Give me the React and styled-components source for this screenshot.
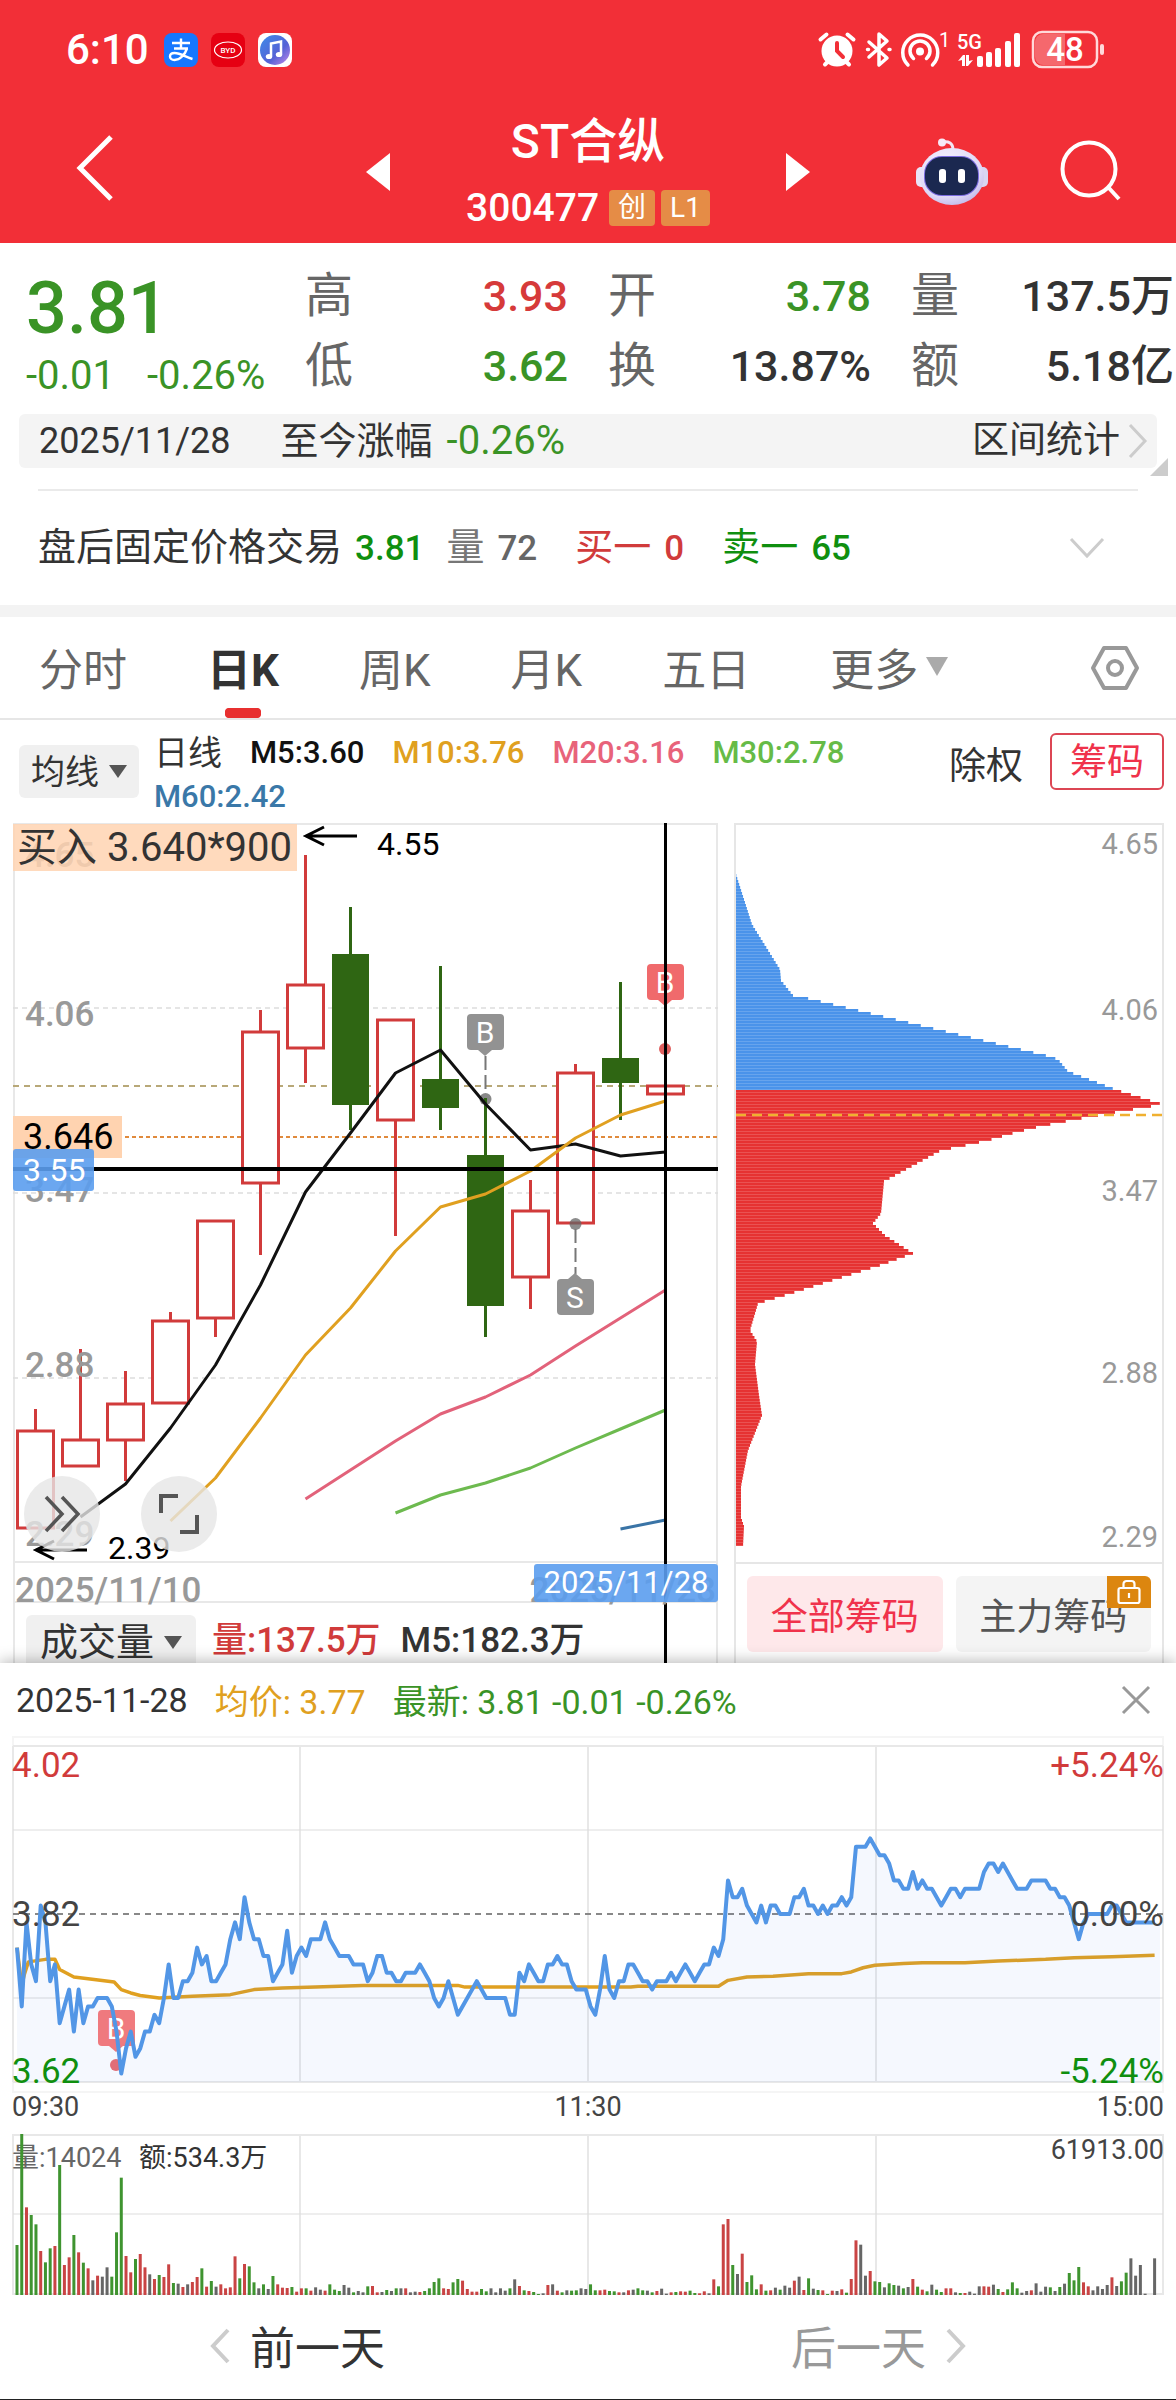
import React from "react";
import styled, { createGlobalStyle } from "styled-components";

const RED = "#d13b3b";
const GREEN = "#3a9326";
const DEEP_GREEN = "#0f8f0f";
const GOLD = "#e0a020";
const FONT = 'Roboto, "Noto Sans CJK SC", sans-serif';

const GlobalStyle = createGlobalStyle`
  *, *::before, *::after { box-sizing: border-box; }
  body { margin: 0; background: #fff; font-family: ${FONT}; color: #333; }
  button, select { font-family: inherit; }
  button { border: 0; padding: 0; background: none; cursor: pointer; color: inherit; }
  svg { display: block; overflow: visible; }
  svg text { font-family: ${FONT}; }
  dl, dd, dt, h1, p { margin: 0; }
`;

const Page = styled.div`
  width: 100%;
  overflow: hidden;
`;

/* ---------- header ---------- */

const Header = styled.header`
  background: #f22f37;
  color: #fff;
`;

const StatusBar = styled.div`
  display: flex;
  align-items: center;
  justify-content: space-between;
  height: 100px;
  padding: 0 70px 0 66px;
`;

const StatusGroup = styled.div`
  display: flex;
  align-items: center;
  gap: ${(p) => p.$gap}px;
`;

const Clock = styled.span`
  font-size: 42px;
  line-height: 48px;
  font-weight: 500;
  padding-right: 2px;
`;

const NavBar = styled.div`
  display: grid;
  grid-template-columns: 1fr auto 1fr;
  align-items: center;
  height: 143px;
  padding: 0 54px 0 76px;
`;

const Switcher = styled.div`
  display: flex;
  align-items: center;
  justify-content: space-between;
  width: 444px;
  margin-left: -22px;
`;

const TitleStack = styled.div`
  display: flex;
  flex-direction: column;
  align-items: center;
  padding-top: 12px;
`;

const Title = styled.h1`
  font-size: 48px;
  line-height: 60px;
  font-weight: 500;
`;

const CodeLine = styled.div`
  display: flex;
  align-items: center;
  gap: 6px;
  height: 72px;
  font-size: 39px;
  font-weight: 500;
`;

const Badge = styled.span`
  height: 36px;
  padding: 0 9px;
  border-radius: 4px;
  background: #e58c46;
  font-size: 28px;
  line-height: 36px;
  font-weight: 400;
  &:first-of-type { margin-left: 4px; }
`;

const NavActions = styled.div`
  display: flex;
  align-items: center;
  justify-content: flex-end;
  gap: 72px;
`;

/* ---------- quote ---------- */

const Quote = styled.section`
  padding-top: 18px;
`;

const QuoteTop = styled.div`
  display: flex;
  align-items: flex-start;
  padding-right: 2px;
`;

const PriceBlock = styled.div`
  width: 305px;
  flex: none;
  padding: 7px 0 0 26px;
  color: ${GREEN};
`;

const Price = styled.div`
  font-size: 72px;
  line-height: 82px;
  font-weight: 500;
`;

const Change = styled.div`
  display: flex;
  gap: 32px;
  font-size: 40px;
  line-height: 52px;
`;

const Stats = styled.dl`
  flex: 1;
  display: grid;
  grid-template-columns: repeat(3, 1fr);
  column-gap: 40px;
`;

const Stat = styled.div`
  display: flex;
  justify-content: space-between;
  align-items: center;
  height: 70px;
  dt { font-size: 48px; line-height: 70px; color: #666; }
  dd { font-size: 43px; line-height: 70px; font-weight: 500; color: ${(p) => p.$tone || "#333"}; white-space: nowrap; }
`;

const RangeStrip = styled.div`
  position: relative;
  display: flex;
  align-items: center;
  height: 54px;
  margin: 12px 19px 0;
  padding: 0 9px 0 20px;
  border-radius: 6px;
  background: #f4f4f4;
  font-size: 38px;
  line-height: 54px;
`;

const RangeDate = styled.span`
  font-size: 36px;
  margin-right: 50px;
`;

const RangeValue = styled.span`
  color: ${GREEN};
  margin-left: 14px;
  font-size: 40px;
`;

const RangeButton = styled.button`
  display: flex;
  align-items: center;
  gap: 8px;
  margin-left: auto;
  font-size: 37px;
  line-height: 54px;
`;

const Corner = styled.span`
  position: absolute;
  right: -11px;
  bottom: -8px;
  width: 18px;
  height: 18px;
  background: #ccc;
  clip-path: polygon(100% 0, 100% 100%, 0 100%);
`;

const AfterHours = styled.div`
  display: flex;
  align-items: center;
  height: 116px;
  margin: 21px 38px 0;
  border-top: 2px solid #eaeaea;
  padding-right: 34px;
  font-size: 38px;
`;

const Pair = styled.span`
  display: flex;
  align-items: baseline;
  gap: 13px;
  margin-right: ${(p) => p.$after}px;
  line-height: 52px;
  color: ${(p) => p.$tone};
  b { font-size: 35px; font-weight: 500; color: ${(p) => p.$value}; }
`;

const ExpandButton = styled.button`
  margin-left: auto;
`;

const Band = styled.div`
  height: 12px;
  background: #f3f3f3;
`;

/* ---------- tabs and legend ---------- */

const Tabs = styled.nav`
  display: flex;
  align-items: stretch;
  gap: 80px;
  height: 103px;
  padding: 0 37px 0 39px;
  border-bottom: 2px solid #e6e6e6;
`;

const Tab = styled.button`
  display: flex;
  align-items: center;
  gap: 8px;
  padding-bottom: 2px;
  font-size: 44px;
  white-space: nowrap;
  color: ${(p) => (p.$active ? "#333" : "#666")};
  font-weight: ${(p) => (p.$active ? 700 : 400)};
  background: ${(p) =>
    p.$active
      ? "radial-gradient(circle at 5px 5px, #e83030 5px, transparent 6px) 18px 100% / 10px 10px no-repeat, radial-gradient(circle at 5px 5px, #e83030 5px, transparent 6px) 44px 100% / 10px 10px no-repeat, linear-gradient(#e83030, #e83030) 23px 100% / 26px 10px no-repeat"
      : "none"};
`;

const SettingsButton = styled.button`
  margin-left: auto;
`;

const Legend = styled.div`
  display: flex;
  align-items: flex-start;
  height: 103px;
  padding: 0 12px 0 19px;
`;

const SelectBox = styled.label`
  display: grid;
  grid-template-columns: 1fr;
  align-items: center;
  flex: none;
  width: ${(p) => p.$width}px;
  height: ${(p) => p.$height}px;
  margin-top: ${(p) => p.$top}px;
  border-radius: ${(p) => p.$radius};
  background: #f0f0f0;
  select, svg { grid-area: 1 / 1; }
  select {
    appearance: none;
    width: 100%;
    height: 100%;
    border: 0;
    padding: 0 0 0 ${(p) => p.$pad}px;
    background: transparent;
    color: #333;
    font-size: ${(p) => p.$size}px;
  }
  svg { justify-self: end; margin-right: ${(p) => p.$pad}px; pointer-events: none; }
`;

const Averages = styled.div`
  flex: 1;
  display: flex;
  flex-wrap: wrap;
  column-gap: 28px;
  padding: 11px 0 0 15px;
  max-width: 760px;
  line-height: 44px;
`;

const Average = styled.span`
  color: ${(p) => p.$tone};
  font-size: ${(p) => (p.$plain ? 34 : 31)}px;
  font-weight: ${(p) => (p.$plain ? 400 : 500)};
`;

const LegendActions = styled.div`
  display: flex;
  align-items: flex-end;
  gap: 27px;
  margin-left: auto;
  padding-top: 13px;
`;

const PlainButton = styled.button`
  font-size: 37px;
  line-height: 46px;
  color: #333;
`;

const ChipButton = styled.button`
  width: 114px;
  height: 57px;
  border: 2px solid #dc4654;
  border-radius: 6px;
  padding-top: 3px;
  color: #f0324b;
  font-size: 37px;
  line-height: 50px;
`;

/* ---------- charts ---------- */

const Charts = styled.div`
  display: grid;
  grid-template-columns: 705fr 430fr;
  gap: 16px;
  padding: 0 12px 0 13px;
`;

const KPanel = styled.section`
  position: relative;
  border-right: 2px solid #e8e8e8;
  border-left: 2px solid #e8e8e8;
  svg.plot { width: calc(100% + 4px); margin: 0 -2px; height: auto; }
`;

const CrossLine = styled.span`
  position: absolute;
  top: 0;
  bottom: 0;
  left: 92.6%;
  width: 3px;
  background: #000;
`;

const RoundButton = styled.button`
  display: grid;
  place-items: center;
  width: 76px;
  height: 76px;
  border-radius: 50%;
  background: rgba(230, 230, 230, 0.8);
`;

const FloatingTools = styled.div`
  position: absolute;
  left: 9px;
  bottom: 111px;
  display: flex;
  gap: 41px;
`;

const DateRow = styled.div`
  position: relative;
  display: flex;
  justify-content: space-between;
  align-items: flex-end;
  height: 40px;
  border-bottom: 2px solid #e8e8e8;
  color: #999;
  font-size: 35px;
  line-height: 20px;
  font-weight: 500;
`;

const ActiveDate = styled.span`
  position: absolute;
  right: -2px;
  top: 1px;
  z-index: 1;
  width: 184px;
  height: 38px;
  border-radius: 3px;
  background: rgba(91, 157, 238, 0.9);
  color: #fff;
  font-size: 31px;
  line-height: 38px;
  font-weight: 400;
  text-align: center;
`;

const VolumeRow = styled.div`
  display: flex;
  align-items: flex-start;
  gap: 16px;
  height: 60px;
  padding: 0 0 0 11px;
  font-size: 35px;
  font-weight: 500;
`;

const VolumeText = styled.span`
  color: ${(p) => p.$tone};
  line-height: 76px;
  margin-right: 4px;
`;

const ChipPanel = styled.section`
  border: 2px solid #e6e6e6;
  border-bottom: 0;
  svg.plot { width: 100%; height: auto; }
`;

const ChipTabs = styled.div`
  display: flex;
  gap: 13px;
  padding: 12px 11px 0;
  border-top: 2px solid #e6e6e6;
`;

const ChipTab = styled.button`
  position: relative;
  flex: 1;
  height: 76px;
  border-radius: 6px;
  background: ${(p) => (p.$active ? "#fee8ea" : "#f4f4f4")};
  color: ${(p) => (p.$active ? "#f0324b" : "#555")};
  font-size: 37px;
`;

const LockBadge = styled.span`
  position: absolute;
  top: 0;
  right: 0;
  display: grid;
  place-items: center;
  width: 44px;
  height: 32px;
  border-radius: 0 6px 0 0;
  background: #dc860f;
`;

/* ---------- intraday sheet ---------- */

const Sheet = styled.section`
  position: relative;
  z-index: 2;
  background: #fff;
  box-shadow: 0 -2px 14px rgba(0, 0, 0, 0.28);
`;

const SheetHead = styled.div`
  display: flex;
  align-items: center;
  gap: 27px;
  height: 73px;
  padding: 0 26px 0 16px;
  font-size: 34px;
`;

const HeadText = styled.span`
  color: ${(p) => p.$tone};
`;

const CloseButton = styled.button`
  margin-left: auto;
`;

const Intraday = styled.div`
  padding: 0 12px;
  svg.plot { width: 100%; height: auto; }
`;

const Times = styled.div`
  display: flex;
  justify-content: space-between;
  height: 41px;
  font-size: 27px;
  line-height: 29px;
  color: #444;
`;

const Footer = styled.footer`
  display: grid;
  grid-template-columns: 1fr 1fr;
  height: 105px;
  padding: 0 7px 3px;
  border-bottom: 1px solid #222;
`;

const DayButton = styled.button`
  display: flex;
  align-items: center;
  justify-content: center;
  gap: 20px;
  font-size: 45px;
  color: ${(p) => p.$tone};
`;

/* ---------- icons ---------- */

function Triangle({ w, h, points, fill }) {
  return (
    <svg width={w} height={h} viewBox={`0 0 ${w} ${h}`} aria-hidden="true">
      <polygon points={points} fill={fill} />
    </svg>
  );
}

function Down({ w = 18, h = 13, fill = "#555" }) {
  return <Triangle w={w} h={h} points={`0,0 ${w},0 ${w / 2},${h}`} fill={fill} />;
}

function Chevron({ w, h, d, color = "#ccc", stroke = 3 }) {
  return (
    <svg width={w} height={h} viewBox={`0 0 ${w} ${h}`} fill="none" stroke={color} strokeWidth={stroke} aria-hidden="true">
      <path d={d} />
    </svg>
  );
}

function AlipayIcon() {
  return (
    <svg width="34" height="34" viewBox="0 0 34 34" fill="none" stroke="#fff" strokeWidth="2.4">
      <rect width="34" height="34" rx="8" fill="#1677ff" stroke="none" />
      <path d="M8 10h18M17 5.500v10M10 15.500h14M23 15.500c-2 6-7 11.500-12.500 11.500-6 0-6-7 0-7 6 0 11 4 18 6" />
    </svg>
  );
}

function BydIcon() {
  return (
    <svg width="34" height="34" viewBox="0 0 34 34">
      <rect width="34" height="34" rx="8" fill="#e60012" />
      <ellipse cx="17" cy="17" rx="13.500" ry="8" fill="none" stroke="#fff" strokeWidth="1.200" />
      <text x="17" y="20" fontSize="8" fontWeight="500" fill="#fff" textAnchor="middle">BYD</text>
    </svg>
  );
}

function MusicIcon() {
  return (
    <svg width="34" height="34" viewBox="0 0 34 34">
      <defs>
        <linearGradient id="music" x1="0" y1="0" x2="1" y2="1">
          <stop offset="0" stopColor="#3f8ce8" />
          <stop offset="0.6" stopColor="#5562d6" />
          <stop offset="1" stopColor="#c58bea" />
        </linearGradient>
      </defs>
      <rect width="34" height="34" rx="8" fill="#fff" />
      <circle cx="17" cy="17" r="15" fill="url(#music)" />
      <path d="M13 23.500V10.500l10-2v13" fill="none" stroke="#fff" strokeWidth="2.500" />
      <ellipse cx="11" cy="23.500" rx="3.200" ry="2.600" fill="#fff" />
      <ellipse cx="21" cy="21.500" rx="3.200" ry="2.600" fill="#fff" />
    </svg>
  );
}

function StatusIcons() {
  return (
    <svg width="288" height="60" viewBox="818 20 288 60" fill="none" stroke="#fff" strokeLinecap="round" aria-hidden="true">
      <circle cx="837" cy="51" r="15.500" fill="#fff" stroke="none" />
      <path d="M820.500 39.500l6-5M853.500 39.500l-6-5M825 64.500l4-4M849 64.500l-4-4" strokeWidth="4" />
      <path d="M837 43v8l6 6" stroke="#f22f37" strokeWidth="4" />
      <path d="M869 42l18 16-8 7V34l8 7-18 16" strokeWidth="3.500" strokeLinejoin="round" />
      <path d="M867.500 49.500h1M889 49.500h1" strokeWidth="3.500" />
      <circle cx="920" cy="51.500" r="4" fill="#fff" stroke="none" />
      <path d="M913.500 58.500a10 10 0 1 1 13 0M908 65a17.500 17.500 0 1 1 24.500 0" strokeWidth="3.500" />
      <g fill="#fff" stroke="none">
        <text x="939" y="47" fontSize="20">1</text>
        <text x="957" y="49" fontSize="20" fontWeight="500">5G</text>
        <rect x="977" y="56" width="6" height="11" rx="2" />
        <rect x="986" y="52" width="6" height="15" rx="2" />
        <rect x="995" y="48" width="6" height="19" rx="2" />
        <rect x="1005" y="41" width="6" height="26" rx="2" />
        <rect x="1014" y="33" width="6" height="34" rx="2" />
        <path d="M958 61l5-6h2v11h-3v-6zM973 60l-5 6h-2V55h3v6z" />
      </g>
      <rect x="1033" y="32" width="64" height="35" rx="9" strokeWidth="2.500" stroke="#ffd9da" />
      <path d="M1043 34h22v31h-22a8 8 0 0 1-8-8V42a8 8 0 0 1 8-8z" fill="#f5686d" stroke="none" />
      <rect x="1100" y="44" width="4" height="11" rx="2" fill="#ffd9da" stroke="none" />
      <text x="1065" y="61" fontSize="33" fontWeight="500" fill="#fff" stroke="none" textAnchor="middle">48</text>
    </svg>
  );
}

function RobotIcon() {
  return (
    <svg width="72" height="68" viewBox="0 0 72 68" aria-hidden="true">
      <defs>
        <radialGradient id="helmet" cx="0.4" cy="0.3" r="0.8">
          <stop offset="0" stopColor="#f8f4ff" />
          <stop offset="0.7" stopColor="#ded8f6" />
          <stop offset="1" stopColor="#b9b0e6" />
        </radialGradient>
      </defs>
      <path d="M26 4c7-1 11 1 11 8" fill="none" stroke="#f4e6f4" strokeWidth="3" />
      <circle cx="26" cy="4.500" r="4" fill="#f7e9f6" />
      <rect x="0" y="29" width="12" height="20" rx="5" fill="#e9e4f7" />
      <rect x="60" y="29" width="12" height="20" rx="5" fill="#d9d5f2" />
      <ellipse cx="36" cy="38.500" rx="32" ry="28.500" fill="url(#helmet)" />
      <rect x="8" y="18" width="55" height="40" rx="18" fill="#7a6be0" />
      <rect x="9" y="19" width="53" height="38" rx="17" fill="#1b2850" />
      <rect x="23" y="31" width="7" height="14" rx="3" fill="#fff" />
      <rect x="42" y="31" width="7" height="14" rx="3" fill="#fff" />
    </svg>
  );
}

function SearchIcon() {
  return (
    <svg width="62" height="62" viewBox="0 0 62 62" fill="none" stroke="#fff" strokeWidth="4" aria-hidden="true">
      <circle cx="29" cy="28" r="26.500" />
      <path d="M48 46l11 12" />
    </svg>
  );
}

function SettingsIcon() {
  return (
    <svg width="48" height="46" viewBox="0 0 48 46" fill="none" stroke="#999" strokeWidth="4" strokeLinejoin="round" aria-hidden="true">
      <path d="M13 3h22l11 20-11 20H13L2 23z" />
      <circle cx="24" cy="23" r="7" />
    </svg>
  );
}

/* ---------- K line chart ---------- */

/* Each candle: wick top, body top, body bottom, wick bottom, rising or falling. */
const CANDLES = [
  [586, 608, 705, 705, "up"],
  [526, 617, 643, 643, "up"],
  [548, 581, 617, 658, "up"],
  [489, 498, 580, 580, "up"],
  [398, 398, 495, 514, "up"],
  [187, 209, 360, 432, "up"],
  [32, 162, 225, 260, "up"],
  [84, 131, 282, 307, "down"],
  [197, 197, 297, 413, "up"],
  [143, 256, 285, 307, "down"],
  [275, 332, 483, 514, "down"],
  [357, 388, 454, 486, "up"],
  [241, 250, 400, 400, "up"],
  [159, 235, 260, 297, "down"],
  [263, 263, 271, 271, "up"],
];

const candleX = (i) => 22.5 + i * 45;

/* Moving averages: index of the first candle, then one height per candle. */
const MOVING = [
  { color: "#111", from: 1, ys: [694, 661, 605, 542, 462, 369, 310, 250, 227, 281, 327, 321, 333, 329] },
  { color: GOLD, from: 3, ys: [698, 655, 595, 532, 485, 428, 384, 371, 348, 315, 292, 278] },
  { color: "#e2627a", from: 6, ys: [676, 647, 618, 591, 574, 552, 523, 495, 467] },
  { color: "#6dba4f", from: 8, ys: [690, 672, 660, 645, 625, 606, 587] },
  { color: "#3a74a6", from: 13, ys: [706, 697] },
];

function Candle({ x, data }) {
  const [high, top, bottom, low, dir] = data;
  if (dir === "down") {
    return (
      <g fill="#2f6613">
        <rect x={x - 1.5} y={high} width="3" height={low - high} />
        <rect x={x - 18.5} y={top} width="37" height={bottom - top} />
      </g>
    );
  }
  return (
    <g stroke={RED} strokeWidth="3" fill="none">
      <path d={`M${x} ${high}V${top}M${x} ${bottom}V${low}`} />
      <rect x={x - 18} y={top} width="36" height={bottom - top} fill="#fff" />
    </g>
  );
}

function Flag({ x, y, letter, color, up }) {
  return (
    <g>
      <rect x={x - 18} y={y} width="37" height="36" rx="4" fill={color} />
      <polygon points={up ? `${x - 7},${y} ${x},${y - 6} ${x + 7},${y}` : `${x - 7},${y + 36} ${x},${y + 42} ${x + 7},${y + 36}`} fill={color} />
      <text x={x} y={y + 29} fontSize="30" fill="#fff" textAnchor="middle">{letter}</text>
    </g>
  );
}

function KChart() {
  const axis = [["4.65", 44], ["4.06", 203], ["3.47", 379], ["2.88", 554], ["2.29", 723]];
  return (
    <svg className="plot" viewBox="0 0 705 740" role="img" aria-label="日K">
      <path d="M0 1H705M0 739H705" stroke="#e8e8e8" strokeWidth="2" />
      <path d="M0 185H705M0 370H705M0 555H705" stroke="#ddd" strokeWidth="1.5" strokeDasharray="5 4" />
      <path d="M0 263H705" stroke="#b8a878" strokeWidth="2" strokeDasharray="6 5" />
      <path d="M0 314H705" stroke="#e08a3c" strokeWidth="2" strokeDasharray="4 3" />
      <line x1="472.5" y1="233" x2="472.5" y2="276" stroke="#777" strokeWidth="2" strokeDasharray="14 5" />
      <circle cx="472.5" cy="276" r="6" fill="#888" />
      {CANDLES.map((c, i) => <Candle key={i} x={candleX(i)} data={c} />)}
      {axis.map(([t, y]) => (
        <text key={t} x="12" y={y} fontSize="35" fontWeight="500" fill="#999">{t}</text>
      ))}
      {MOVING.map((m) => (
        <polyline
          key={m.color}
          points={m.ys.map((y, i) => `${candleX(m.from + i)},${y}`).join(" ")}
          fill="none"
          stroke={m.color}
          strokeWidth="3"
          strokeLinejoin="round"
        />
      ))}
      <circle cx="562.5" cy="401" r="6" fill="#666" fillOpacity="0.75" />
      <line x1="562.5" y1="406" x2="562.5" y2="451" stroke="#777" strokeWidth="2" strokeDasharray="14 5" />
      <Flag x={472} y={191} letter="B" color="#929292" />
      <Flag x={562} y={456} letter="S" color="#929292" up />
      <Flag x={652} y={141} letter="B" color="#f06a6c" />
      <circle cx="652" cy="226" r="6" fill="#e0605f" />
      <path d="M0 346H705" stroke="#000" strokeWidth="4" />
      <rect x="0" y="1" width="284" height="47" fill="#ffd3b0" fillOpacity="0.84" />
      <text x="4" y="38" fontSize="40" fill="#333">买入 3.640*900</text>
      <rect x="0" y="293" width="109" height="42" fill="#ffd3b0" />
      <text x="10" y="326" fontSize="36" fill="#000">3.646</text>
      <rect x="0" y="326" width="81" height="42" rx="3" fill="#5b9dee" fillOpacity="0.9" />
      <text x="10" y="358" fontSize="32" fill="#fff">3.55</text>
      <g fill="none" stroke="#000" strokeWidth="3">
        <path d="M344 13H293M311 4l-18 9 18 9" />
        <path d="M74 727H23M41 718l-18 9 18 9" />
      </g>
      <text x="364" y="32" fontSize="32" fill="#000">4.55</text>
      <text x="95" y="736" fontSize="32" fill="#000">2.39</text>
    </svg>
  );
}

/* ---------- chip distribution ---------- */

/* Height in the panel against the width of the bar there. */
const CHIPS = [
  [49, 0], [99, 16], [144, 44], [155, 45], [170, 57], [172, 68], [231, 314], [234, 322], [246, 332], [265, 382],
  [279, 427], [288, 373], [294, 340], [301, 304], [307, 280], [315, 252], [321, 225], [325, 205], [356, 148],
  [388, 145], [398, 137], [410, 149], [428, 177], [439, 147], [469, 52], [478, 22], [505, 14], [516, 21],
  [539, 19], [570, 23], [590, 26], [625, 12], [661, 5], [692, 5], [701, 8], [721, 7],
];

function chipWidth(y) {
  const k = CHIPS.findIndex((p) => p[0] >= y);
  if (k <= 0) return 0;
  const [y0, w0] = CHIPS[k - 1];
  const [y1, w1] = CHIPS[k];
  return w0 + ((w1 - w0) * (y - y0)) / (y1 - y0);
}

function ChipChart() {
  const bars = [];
  for (let y = 49; y < 720; y += 3) bars.push([y, chipWidth(y + 1)]);
  const axis = [["4.65", 29], ["4.06", 195], ["3.47", 376], ["2.88", 558], ["2.29", 722]];
  return (
    <svg className="plot" viewBox="0 0 426 737" role="img" aria-label="筹码">
      {bars.map(([y, w]) => (
        <g key={y}>
          <rect x="0" y={y} width={w} height="3" fill={y < 265 ? "#4a93ea" : "#e63232"} />
          <rect x="0" y={y + 2} width={w} height="1" fill="#fff" fillOpacity="0.16" />
        </g>
      ))}
      <path d="M0 290H426" stroke="#f0b030" strokeWidth="2.5" strokeDasharray="10 6" />
      {axis.map(([t, y]) => (
        <text key={t} x="422" y={y} fontSize="29" fill="#999" textAnchor="end">{t}</text>
      ))}
    </svg>
  );
}

/* ---------- intraday charts ---------- */

/* [minute, cents above the previous close] */
const PRICE = [
  [0, -4], [1, -11], [2, -1], [3, -6], [4, -8], [5, 1], [6, -1], [7, -8], [8, -6], [9, -13], [10, -11], [11, -9],
  [12, -14], [13, -9], [14, -13], [15, -11], [16, -11], [17, -10], [19, -10], [20, -11], [21, -14], [22, -19],
  [23, -16], [24, -14], [25, -17], [26, -16], [27, -14], [28, -14], [29, -12], [30, -13], [31, -10], [32, -6],
  [33, -10], [34, -10], [35, -8], [36, -8], [37, -7], [38, -4], [39, -6], [40, -5], [41, -8], [42, -8], [43, -7],
  [44, -6], [45, -3], [46, -1], [47, -3], [48, 2], [49, -1], [50, -3], [51, -3], [52, -5], [53, -5], [54, -8],
  [55, -7], [56, -6], [57, -2], [58, -7], [59, -5], [60, -4], [61, -5], [62, -3], [64, -3], [65, -1], [66, -3],
  [67, -4], [68, -5], [70, -5], [71, -6], [73, -6], [74, -8], [75, -7], [76, -5], [77, -5], [78, -7], [79, -7],
  [80, -8], [81, -8], [82, -7], [84, -7], [85, -6], [86, -7], [87, -8], [88, -10], [89, -11], [90, -10], [91, -8],
  [92, -10], [93, -12], [95, -10], [97, -8], [98, -9], [99, -10], [103, -10], [104, -12], [105, -12], [106, -7],
  [107, -8], [108, -6], [109, -7], [110, -8], [111, -8], [112, -6], [113, -6], [114, -5], [115, -6], [116, -6],
  [117, -8], [118, -9], [120, -9], [121, -11], [122, -12], [123, -9], [124, -5], [125, -9], [126, -10], [127, -8],
  [128, -8], [129, -6], [130, -6], [131, -7], [132, -8], [133, -8], [134, -9], [135, -8], [137, -8], [138, -7],
  [139, -8], [140, -7], [141, -6], [142, -7], [143, -8], [144, -7], [145, -6], [146, -6], [147, -4], [148, -5],
  [149, -3], [150, 4], [151, 2], [152, 2], [153, 3], [154, 1], [155, 0], [156, -1], [157, 1], [158, -1], [159, 1],
  [160, 1], [161, 0], [163, 0], [164, 2], [165, 2], [166, 3], [167, 1], [168, 1], [169, 0], [170, 1], [171, 0],
  [172, 1], [173, 1], [174, 2], [175, 1], [176, 2], [177, 8], [179, 8], [180, 9], [181, 8], [182, 7], [183, 7],
  [184, 6], [185, 4], [186, 4], [187, 3], [188, 3], [189, 5], [190, 3], [191, 4], [192, 3], [193, 3], [195, 1],
  [196, 2], [197, 3], [198, 3], [199, 2], [200, 3], [203, 3], [204, 5], [205, 6], [206, 6], [207, 5], [208, 6],
  [209, 5], [210, 4], [211, 3], [213, 3], [214, 4], [217, 4], [218, 3], [219, 3], [220, 2], [221, 2], [222, 1],
  [223, -1], [224, -3], [225, -1], [226, 0], [230, 0], [231, 1], [232, 1], [233, 0], [234, -1], [240, -1],
];

const MEAN = [
  [0, -4], [1, -8.5], [1.6, -7.1], [2.4, -5.7], [6, -5.4], [8, -5.4], [9, -6.6], [10, -6.9], [12, -7.5], [15, -7.7],
  [20.5, -8.1], [22, -9], [24, -9.4], [26, -9.7], [30, -10], [37, -9.8], [45, -9.6], [50, -9], [56, -8.8],
  [63, -8.7], [73, -8.5], [93, -8.5], [94.5, -8.7], [129.5, -8.7], [131, -8.6], [148, -8.6], [150, -7.9],
  [154, -7.5], [159.5, -7.4], [167, -7.1], [174, -7.1], [176, -6.9], [178.5, -6.4], [181, -6.1], [187, -5.9],
  [191, -5.8], [200, -5.8], [207, -5.6], [217, -5.4], [223, -5.2], [231, -5.1], [240, -4.9],
];

/* One bar per minute: r rise, g fall, k flat, then the size. */
const VOLUME =
  "g150 g483 r263 g240 g212 r132 g98 g140 r147 g390 r90 r113 g180 r128 g97 r80 k44 r58 k55 k83 g55 g188 g352 r117 r68 g108 r123 r83 k62 r48 g60 r54 r92 g36 k34 r24 k32 r39 r54 g80 r25 g42 k25 r32 r20 r23 r116 g50 r93 g86 g38 k20 g32 k18 g57 r32 r22 r21 g24 r10 r20 g20 r13 k23 k16 r13 g32 g16 g12 k30 k22 g8 k12 k8 g26 r27 r8 k9 g15 k12 g20 k20 r20 k8 k10 r9 g12 g20 g39 g50 r20 r18 g38 g48 r43 r18 r10 r10 g18 g11 k20 k8 k20 k13 g20 k47 r27 g14 r12 g9 g3 k5 r30 k32 r13 g8 k14 g13 g14 k20 k18 g32 g14 r14 r16 g12 g11 r8 k8 r14 k16 g20 g14 k13 g8 r12 k19 k4 r8 g9 r11 r10 g13 g6 r5 r11 k5 r47 g26 r212 r228 g90 k63 r124 g39 g59 g17 r32 g13 r14 k22 g16 k28 k22 r43 k55 r15 g50 k19 g15 r14 g3 r13 k12 r17 g7 r48 r164 k151 k58 r72 g41 g39 k23 g35 g30 k28 g20 k24 r48 g25 r16 g11 k31 g16 g9 r20 r20 k8 g6 r6 k10 k4 k26 r26 r25 k31 g18 r9 g17 g38 g20 k7 k12 r14 k35 k10 k25 g23 k12 g24 k34 g66 g44 g84 r38 r26 k14 k26 k18 k30 r53 k27 g41 g67 k110 k58 k90 k4 k0 k110".split(" ");

const BAR = { r: "#c94444", g: "#3f9430", k: "#666" };

const minuteX = (m) => 5 + m * 4.74;
const centY = (c) => 178 - c * 8.4;
const toPoints = (list) => list.map(([m, c]) => `${minuteX(m)},${centY(c)}`).join(" ");

function PriceChart() {
  return (
    <svg className="plot" viewBox="0 0 1152 357" role="img" aria-label="分时">
      <rect x="1" y="1" width="1150" height="355" fill="none" stroke="#f5f5f5" strokeWidth="2" />
      <path d="M1 10H1151M1 346H1151M1 10V346M288 10V346M576 10V346M864 10V346M1151 10V346" stroke="#e8e8e8" strokeWidth="2" />
      <path d="M1 94H1151M1 262H1151" stroke="#ddd" strokeWidth="1" />
      <path d="M1 178H1151" stroke="#888" strokeWidth="2" strokeDasharray="6 5" />
      <polyline points={toPoints(MEAN)} fill="none" stroke={GOLD} strokeWidth="3.5" strokeLinejoin="round" />
      <polygon points={`${minuteX(0)},346 ${toPoints(PRICE)} 1148,${centY(-1)} 1148,346`} fill="#4a88ee" fillOpacity="0.055" />
      <g opacity="0.85">
        <Flag x={104} y={274} letter="B" color="#ee6468" />
        <circle cx="104" cy="329" r="6" fill="#dd5560" />
      </g>
      <polyline points={toPoints(PRICE)} fill="none" stroke="#5296e6" strokeWidth="4" strokeLinejoin="round" />
      <g fontSize="35">
        <text x="0" y="41" fill={RED}>4.02</text>
        <text x="0" y="190" fill="#444">3.82</text>
        <text x="0" y="347" fill={DEEP_GREEN}>3.62</text>
        <g textAnchor="end">
          <text x="1152" y="41" fill={RED}>+5.24%</text>
          <text x="1152" y="190" fill="#444">0.00%</text>
          <text x="1152" y="347" fill={DEEP_GREEN}>-5.24%</text>
        </g>
      </g>
    </svg>
  );
}

function VolumeChart() {
  return (
    <svg className="plot" viewBox="0 0 1152 161" role="img" aria-label="成交量">
      <path d="M1 1H1151M1 160H1151M1 0V161M288 0V161M576 0V161M864 0V161M1151 0V161" stroke="#e8e8e8" strokeWidth="2" />
      <path d="M1 80H1151" stroke="#ddd" strokeWidth="1" />
      <text x="0" y="33" fontSize="27" fill="#666">量:14024</text>
      <text x="127" y="33" fontSize="27" fill="#333">额:534.3万</text>
      <text x="1152" y="25" fontSize="27" fill="#444" textAnchor="end">61913.00</text>
      {VOLUME.map((v, i) => {
        const h = Number(v.slice(1)) / 3;
        return <rect key={i} x={minuteX(i) - 1.5} y={161 - h} width="3" height={h} fill={BAR[v[0]]} />;
      })}
    </svg>
  );
}

/* ---------- page ---------- */

const STATS = [
  ["高", "3.93", "#d63a3a"],
  ["开", "3.78", GREEN],
  ["量", "137.5万"],
  ["低", "3.62", GREEN],
  ["换", "13.87%"],
  ["额", "5.18亿"],
];

const TABS = ["分时", "日K", "周K", "月K", "五日"];

const AVERAGES = [
  ["M5:3.60", "#111"],
  ["M10:3.76", GOLD],
  ["M20:3.16", "#e8637a"],
  ["M30:2.78", "#66bb47"],
  ["M60:2.42", "#3a78a8"],
];

export default function App() {
  return (
    <Page>
      <GlobalStyle />
      <Header>
        <StatusBar>
          <StatusGroup $gap={13}>
            <Clock>6:10</Clock>
            <AlipayIcon />
            <BydIcon />
            <MusicIcon />
          </StatusGroup>
          <StatusIcons />
        </StatusBar>
        <NavBar>
          <div>
            <button aria-label="返回">
              <Chevron w={38} h={66} d="M35 0L4 31l31 31" color="#fff" stroke={5} />
            </button>
          </div>
          <Switcher>
            <button aria-label="上一只">
              <Triangle w={24} h={38} points="24,0 24,38 0,19" fill="#fff" />
            </button>
            <TitleStack>
              <Title>ST合纵</Title>
              <CodeLine>
                300477
                <Badge>创</Badge>
                <Badge>L1</Badge>
              </CodeLine>
            </TitleStack>
            <button aria-label="下一只">
              <Triangle w={24} h={38} points="0,0 0,38 24,19" fill="#fff" />
            </button>
          </Switcher>
          <NavActions>
            <button aria-label="助手"><RobotIcon /></button>
            <button aria-label="搜索"><SearchIcon /></button>
          </NavActions>
        </NavBar>
      </Header>

      <Quote>
        <QuoteTop>
          <PriceBlock>
            <Price>3.81</Price>
            <Change>
              <span>-0.01</span>
              <span>-0.26%</span>
            </Change>
          </PriceBlock>
          <Stats>
            {STATS.map(([k, v, tone]) => (
              <Stat key={k} $tone={tone}>
                <dt>{k}</dt>
                <dd>{v}</dd>
              </Stat>
            ))}
          </Stats>
        </QuoteTop>
        <RangeStrip>
          <RangeDate>2025/11/28</RangeDate>
          <span>至今涨幅</span>
          <RangeValue>-0.26%</RangeValue>
          <RangeButton>
            区间统计
            <Chevron w={20} h={34} d="M2 1l15 16L2 33" />
          </RangeButton>
          <Corner />
        </RangeStrip>
        <AfterHours>
          <Pair $after={22} $value={DEEP_GREEN}>盘后固定价格交易 <b>3.81</b></Pair>
          <Pair $after={38} $tone="#777" $value="#666">量 <b>72</b></Pair>
          <Pair $after={38} $tone={RED} $value={RED}>买一 <b>0</b></Pair>
          <Pair $after={0} $tone={DEEP_GREEN} $value={DEEP_GREEN}>卖一 <b>65</b></Pair>
          <ExpandButton aria-label="展开">
            <Chevron w={34} h={22} d="M1 2l16 17L33 2" />
          </ExpandButton>
        </AfterHours>
      </Quote>
      <Band />

      <Tabs>
        {TABS.map((t) => <Tab key={t} $active={t === "日K"}>{t}</Tab>)}
        <Tab>
          更多
          <Down w={22} h={19} fill="#aaa" />
        </Tab>
        <SettingsButton aria-label="设置"><SettingsIcon /></SettingsButton>
      </Tabs>

      <Legend>
        <SelectBox $width={120} $height={53} $top={25} $radius="6px" $pad={12} $size={34}>
          <select aria-label="指标" defaultValue="均线">
            <option>均线</option>
          </select>
          <Down />
        </SelectBox>
        <Averages>
          <Average $plain $tone="#333">日线</Average>
          {AVERAGES.map(([t, c]) => <Average key={t} $tone={c}>{t}</Average>)}
        </Averages>
        <LegendActions>
          <PlainButton>除权</PlainButton>
          <ChipButton>筹码</ChipButton>
        </LegendActions>
      </Legend>

      <Charts>
        <KPanel>
          <KChart />
          <CrossLine />
          <FloatingTools>
            <RoundButton aria-label="快进">
              <svg width="38" height="38" viewBox="0 0 38 38" fill="none" stroke="#555" strokeWidth="3.500">
                <path d="M3 2l16 17L3 36M19 2l16 17-16 17" />
              </svg>
            </RoundButton>
            <RoundButton aria-label="全屏">
              <svg width="40" height="40" viewBox="0 0 40 40" fill="none" stroke="#555" strokeWidth="4">
                <path d="M2 19V2h17M38 21v17H21" />
              </svg>
            </RoundButton>
          </FloatingTools>
          <DateRow>
            <span>2025/11/10</span>
            <span>2025/11/28</span>
            <ActiveDate>2025/11/28</ActiveDate>
          </DateRow>
          <VolumeRow>
            <SelectBox $width={170} $height={54} $top={12} $radius="6px" $pad={14} $size={38}>
              <select aria-label="副图" defaultValue="成交量">
                <option>成交量</option>
              </select>
              <Down />
            </SelectBox>
            <VolumeText $tone={RED}>量:137.5万</VolumeText>
            <VolumeText $tone="#333">M5:182.3万</VolumeText>
          </VolumeRow>
        </KPanel>
        <ChipPanel>
          <ChipChart />
          <ChipTabs>
            <ChipTab $active>全部筹码</ChipTab>
            <ChipTab>
              主力筹码
              <LockBadge>
                <svg width="24" height="26" viewBox="0 0 24 26" fill="none" stroke="#fff" strokeWidth="2.200">
                  <rect x="1.500" y="9" width="21" height="15" rx="2" />
                  <path d="M6.500 9V5a3 3 0 0 1 3-3h5a3 3 0 0 1 3 3v4M12 14v5" />
                </svg>
              </LockBadge>
            </ChipTab>
          </ChipTabs>
        </ChipPanel>
      </Charts>

      <Sheet>
        <SheetHead>
          <HeadText $tone="#333">2025-11-28</HeadText>
          <HeadText $tone={GOLD}>均价: 3.77</HeadText>
          <HeadText $tone={GREEN}>最新: 3.81 -0.01 -0.26%</HeadText>
          <CloseButton aria-label="关闭">
            <Chevron w={28} h={28} d="M1 1l26 26M27 1L1 27" color="#999" />
          </CloseButton>
        </SheetHead>
        <Intraday>
          <PriceChart />
          <Times>
            <span>09:30</span>
            <span>11:30</span>
            <span>15:00</span>
          </Times>
          <VolumeChart />
        </Intraday>
        <Footer>
          <DayButton $tone="#333">
            <Chevron w={20} h={36} d="M18 2L3 18l15 16" stroke={4} />
            前一天
          </DayButton>
          <DayButton $tone="#999">
            后一天
            <Chevron w={20} h={36} d="M2 2l15 16L2 34" stroke={4} />
          </DayButton>
        </Footer>
      </Sheet>
    </Page>
  );
}
